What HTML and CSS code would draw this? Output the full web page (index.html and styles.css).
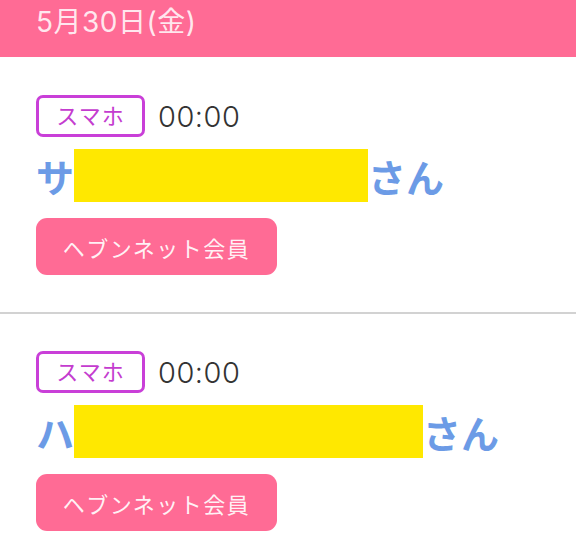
FILE: index.html
```html
<!DOCTYPE html>
<html lang="ja">
<head>
    <meta charset="UTF-8">
    <meta name="viewport" content="width=device-width, initial-scale=1.0">
    <title>予約一覧</title>
    <link rel="stylesheet" href="styles.css">
</head>
<body>
    <div class="date-bar">5月30日(金)</div>

    <div class="entry">
        <div class="meta">
            <span class="badge">スマホ</span>
            <span class="time">00:00</span>
        </div>
        <div class="name">サ<span class="mask" style="width: 294px;"></span>さん</div>
        <a class="member-btn">ヘブンネット会員</a>
    </div>

    <div class="entry">
        <div class="meta">
            <span class="badge">スマホ</span>
            <span class="time">00:00</span>
        </div>
        <div class="name">ハ<span class="mask" style="width: 349px;"></span>さん</div>
        <a class="member-btn">ヘブンネット会員</a>
    </div>
</body>
</html>
```

FILE: styles.css
```css
body {
    margin: 0;
    background: #fff;
    font-family: Inter, "Noto Sans CJK JP", sans-serif;
}

.date-bar {
    height: 57px;
    padding: 0 36px;
    background: #ff6b95;
    color: rgba(255, 255, 255, 0.85);
    font-size: 28px;
    line-height: 44px;
    letter-spacing: 0.5px;
}

.entry {
    padding: 38px 36px 37px;
    border-bottom: 2px solid #d2d2d2;
}

.entry + .entry {
    padding-top: 37px;
}

.meta {
    display: flex;
    align-items: center;
    gap: 13px;
}

.badge {
    box-sizing: border-box;
    width: 109px;
    height: 42px;
    border: 3px solid #c93fd8;
    border-radius: 7px;
    color: #c43ccf;
    font-size: 22px;
    line-height: 36px;
    text-align: center;
    letter-spacing: 1px;
}

.time {
    font-size: 29px;
    font-weight: 300;
    letter-spacing: 0.5px;
    color: #333;
}

.name {
    display: flex;
    align-items: center;
    margin-top: 12px;
    height: 53px;
    font-family: "Noto Sans CJK JP", sans-serif;
    font-size: 38px;
    font-weight: bold;
    color: #6c9be6;
}

.mask {
    display: inline-block;
    height: 53px;
    background: #ffe800;
}

.member-btn {
    display: flex;
    align-items: center;
    justify-content: center;
    width: 241px;
    height: 57px;
    margin-top: 16px;
    border-radius: 11px;
    background: #ff6b95;
    color: rgba(255, 255, 255, 0.92);
    font-size: 22px;
    letter-spacing: 1.5px;
}
```
